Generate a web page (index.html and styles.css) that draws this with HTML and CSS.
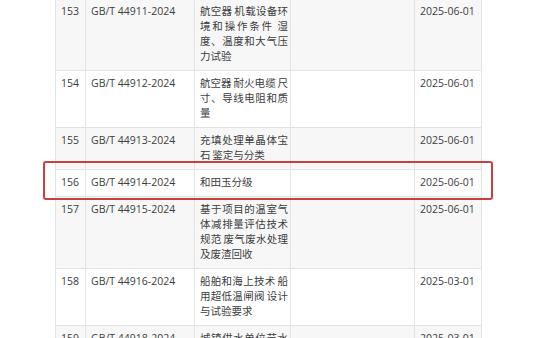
FILE: index.html
```html
<!DOCTYPE html>
<html lang="zh-CN">
<head>
<meta charset="utf-8">
<link rel="stylesheet" href="styles.css">
</head>
<body>
<div class="wrap">
  <table class="std">
    <colgroup>
      <col class="c-no"><col class="c-code"><col class="c-name"><col class="c-rep"><col class="c-date">
    </colgroup>
    <tbody>
      <tr class="alt"><td>153</td><td>GB/T 44911-2024</td><td class="name">航空器 机载设备环境和操作条件 湿度、温度和大气压力试验</td><td></td><td>2025-06-01</td></tr>
      <tr><td>154</td><td>GB/T 44912-2024</td><td class="name">航空器 耐火电缆 尺寸、导线电阻和质量</td><td></td><td>2025-06-01</td></tr>
      <tr class="alt"><td>155</td><td>GB/T 44913-2024</td><td class="name">充填处理单晶体宝石 鉴定与分类</td><td></td><td>2025-06-01</td></tr>
      <tr><td>156</td><td>GB/T 44914-2024</td><td class="name">和田玉分级</td><td></td><td>2025-06-01</td></tr>
      <tr class="alt"><td>157</td><td>GB/T 44915-2024</td><td class="name">基于项目的温室气体减排量评估技术规范 废气废水处理及废渣回收</td><td></td><td>2025-06-01</td></tr>
      <tr><td>158</td><td>GB/T 44916-2024</td><td class="name">船舶和海上技术 船用超低温闸阀 设计与试验要求</td><td></td><td>2025-03-01</td></tr>
      <tr class="alt"><td>159</td><td>GB/T 44918-2024</td><td class="name">城镇供水单位节水评价导则</td><td></td><td>2025-03-01</td></tr>
    </tbody>
  </table>
  <div class="mark"></div>
</div>
</body>
</html>
```
FILE: styles.css
```css
html, body {
  margin: 0;
  padding: 0;
  background: #ffffff;
}
body {
  width: 550px;
  height: 338px;
  overflow: hidden;
  font-family: "Open Sans", "Noto Sans CJK SC", sans-serif;
  font-size: 10.5px;
  line-height: 15px;
  color: #3d3d3d;
}
.wrap {
  position: relative;
  margin-left: 55px;
  margin-top: -2px;
  width: 426px;
}
.std {
  border-collapse: collapse;
  table-layout: fixed;
  width: 426px;
}
.c-no { width: 30px; }
.c-code { width: 109px; }
.c-name { width: 96px; }
.c-rep { width: 124px; }
.c-date { width: 67px; }
.std td {
  border: 1px solid #e3e3e3;
  padding: 5px 5px 6px 5px;
  vertical-align: top;
  white-space: nowrap;
}
.std td.name {
  white-space: normal;
  text-align: justify;
  word-spacing: -1px;
  padding-right: 2px;
}
.std tr.alt td {
  background: #f7f7f7;
}
.mark {
  position: absolute;
  left: -12px;
  top: 163px;
  width: 446px;
  height: 35px;
  border: 2px solid #c9403f;
  border-radius: 3px;
}
```
